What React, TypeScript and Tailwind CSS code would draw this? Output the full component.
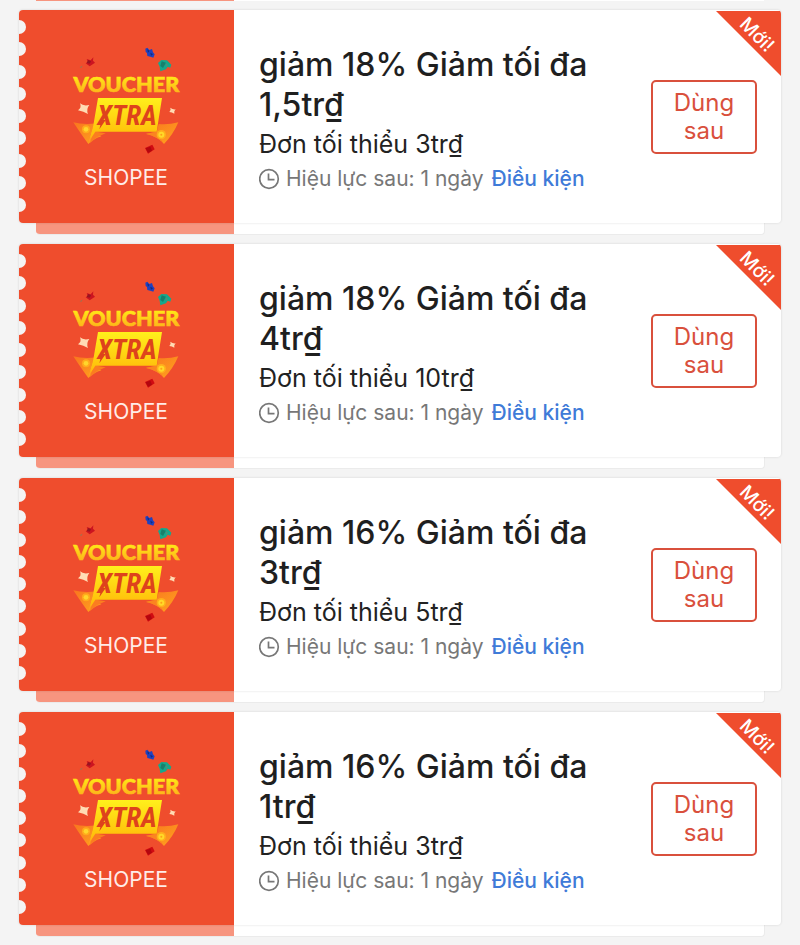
type Voucher = {
  id: number
  percent: string
  max: string
  min: string
}

const vouchers: Voucher[] = [
  { id: 1, percent: '18%', max: '1,5tr₫', min: '3tr₫' },
  { id: 2, percent: '18%', max: '4tr₫', min: '10tr₫' },
  { id: 3, percent: '16%', max: '3tr₫', min: '5tr₫' },
  { id: 4, percent: '16%', max: '1tr₫', min: '3tr₫' },
]

const notches = Array.from({ length: 9 }, (_, i) => i)

function VoucherLogo() {
  return (
    <svg width="120" height="112" viewBox="18 15 360 336" role="img" aria-label="Voucher Xtra">
      <defs>
        <linearGradient id="gold" x1="0" y1="110" x2="0" y2="158" gradientUnits="userSpaceOnUse">
          <stop offset="0" stopColor="#ffe916" />
          <stop offset="1" stopColor="#fdb41a" />
        </linearGradient>
        <linearGradient id="plate" x1="0" y1="0" x2="0" y2="1">
          <stop offset="0" stopColor="#fff01c" />
          <stop offset="1" stopColor="#ffb908" />
        </linearGradient>
        <linearGradient id="ticket" x1="0" y1="0" x2="1" y2="1">
          <stop offset="0" stopColor="#f9751f" />
          <stop offset="1" stopColor="#ffa51e" />
        </linearGradient>
      </defs>

      {/* Confetti */}
      <path d="M80 57L92 61L100 52L99 62L105 68L89 79L77 70L84 66Z" fill="#cc1420" />
      <path d="M84 60L93 64L89 71L80 69Z" fill="#981422" />
      <path d="M59 82L68 77L64 83Z" fill="#8a7a5a" />
      <path d="M256 26L262 23L268 30L276 27L279 37L284 43L280 53L271 50L262 48L261 39L257 36Z" fill="#1e41c0" />
      <path d="M262 28L268 33L264 38ZM271 38L279 43L273 47Z" fill="#12297c" />
      <path d="M294 69L304 60L321 61L334 74L331 83L323 80L318 88L301 94L299 80Z" fill="#16a88c" />
      <path d="M305 64L318 68L309 84L301 78Z" fill="#17806c" />
      <path d="M317 69L324 75L318 81Z" fill="#4f8f78" />
      <path d="M255 324L277 314L284 328L264 341Z" fill="#d00b12" />
      <path d="M257 325L271 320L276 332L264 338Z" fill="#b3060f" />

      {/* Tickets */}
      <path d="M40 247Q70 255 112 250L104 276L124 289Q102 295 85 312Q65 285 40 247Z" fill="url(#ticket)" />
      <path d="M100 274L90 309L112 291L137 280Z" fill="#fb7d20" />
      <path d="M106 250L98 274L86 309L96 274Z" fill="#ffc928" />
      <circle cx="78" cy="268" r="12" fill="#ffab1c" />
      <circle cx="78" cy="268" r="7" fill="#ffd62c" />
      <path d="M296 252Q325 255 355 247Q340 283 312 312Q294 290 258 282L290 275Z" fill="url(#ticket)" />
      <path d="M258 281L290 275L308 306Q290 289 258 281Z" fill="#fb8520" />
      <circle cx="304" cy="284" r="14" fill="#ffae1c" />
      <circle cx="304" cy="284" r="9" fill="#ffd928" />
      <circle cx="304" cy="284" r="3" fill="#ff9f18" />

      <path d="M114 174H306L290 275H106L91 298L100 256Z" fill="url(#plate)" />

      {/* Sparkles */}
      <path d="M60 190Q70 199 88 195Q78 207 84 222Q71 214 54 211Q66 203 60 190Z" fill="#ffdcb4" />
      <path d="M331 203Q338 209 347 208Q341 213 343 221Q336 216 328 216Q334 210 331 203Z" fill="#ffdcb4" />

      <text
        x="199"
        y="156"
        textAnchor="middle"
        fontFamily="Lato, Inter, sans-serif"
        fontWeight="900"
        fontSize="65"
        fill="url(#gold)"
        stroke="url(#gold)"
        strokeWidth="2"
      >
        VOUCHER
      </text>
      <text
        x="201"
        y="255"
        textAnchor="middle"
        fontFamily="'Liberation Sans Narrow', 'Roboto Condensed', sans-serif"
        fontWeight="700"
        fontStyle="italic"
        fontSize="82"
        fill="#de431c"
      >
        XTRA
      </text>
      <path d="M118 268L125 240L137 240Z" fill="#de431c" />
    </svg>
  )
}

function ClockIcon() {
  return (
    <svg
      className="shrink-0"
      width="21"
      height="22"
      viewBox="0 0 21 22"
      fill="none"
      stroke="#777777"
      strokeWidth="1.7"
      aria-hidden="true"
    >
      <circle cx="10" cy="11" r="9.3" />
      <path d="M9.5 5.5V11.7H15.5" />
    </svg>
  )
}

function VoucherCard({ voucher }: { voucher: Voucher }) {
  return (
    <li>
      <article className="relative flex h-[213px] overflow-hidden rounded-[4px] bg-white shadow-[0_0_2px_1px_rgba(0,0,0,0.06)]">
        {/* Brand */}
        <div className="flex w-[215px] shrink-0 bg-[#ef4d2d]">
          <div className="flex w-2 flex-col justify-between pt-[10px] pb-[11px]">
            {notches.map((n) => (
              <span key={n} className="h-[14px] w-[7px] rounded-r-full bg-[#f4f4f4]" />
            ))}
          </div>
          <div className="flex flex-1 flex-col items-center pt-[35px] pr-[9px]">
            <VoucherLogo />
            <p className="mt-2 text-[21px] leading-[26px] text-[#ffece8]">SHOPEE</p>
          </div>
        </div>

        {/* Details */}
        <div className="min-w-0 flex-1 pt-[35px] pl-[25px]">
          <h2 className="max-w-[350px] text-[32px] leading-10 font-medium text-[#1f1f1f]">
            giảm {voucher.percent} Giảm tối đa {voucher.max}
          </h2>
          <p className="text-[25px] leading-[38px] text-[#222222]">Đơn tối thiểu {voucher.min}</p>
          <div className="flex items-center text-[21px] leading-8 whitespace-nowrap text-[#777777]">
            <ClockIcon />
            <span className="ml-[6px]">Hiệu lực sau: 1 ngày</span>
            <a href="#" className="ml-2 font-medium text-[#3f7bd8]">
              Điều kiện
            </a>
          </div>
        </div>

        <div className="flex shrink-0 items-center pr-6">
          <button
            type="button"
            className="h-[74px] w-[106px] rounded-[5px] border-2 border-[#d9503c] px-4 text-2xl leading-[28px] text-[#d9503c]"
          >
            Dùng sau
          </button>
        </div>

        {/* Corner ribbon */}
        <div className="absolute top-px right-0 flex size-[65px] items-center justify-center bg-[#ef4d2d] [clip-path:polygon(0_0,100%_0,100%_100%)]">
          <span className="mb-[18px] ml-4 rotate-45 text-[19px] leading-5 font-medium text-white">Mới!</span>
        </div>
      </article>

      {/* Stacked card edge */}
      <div className="mr-4 ml-[17px] flex h-3 overflow-hidden rounded-b-[4px] border-r border-b border-[#ebebeb] bg-white">
        <div className="w-[198px] bg-[#f7957f]" />
      </div>
    </li>
  )
}

export default function App() {
  return (
    <main className="min-h-screen bg-[#f4f4f4] pb-2 font-[Inter,'Noto_Sans',sans-serif]">
      <div className="mx-[36px] mb-[9px] flex h-px bg-white">
        <div className="w-[198px] bg-[#f7957f]" />
      </div>
      <ul className="mx-[19px] flex flex-col gap-[9px]">
        {vouchers.map((voucher) => (
          <VoucherCard key={voucher.id} voucher={voucher} />
        ))}
      </ul>
    </main>
  )
}
